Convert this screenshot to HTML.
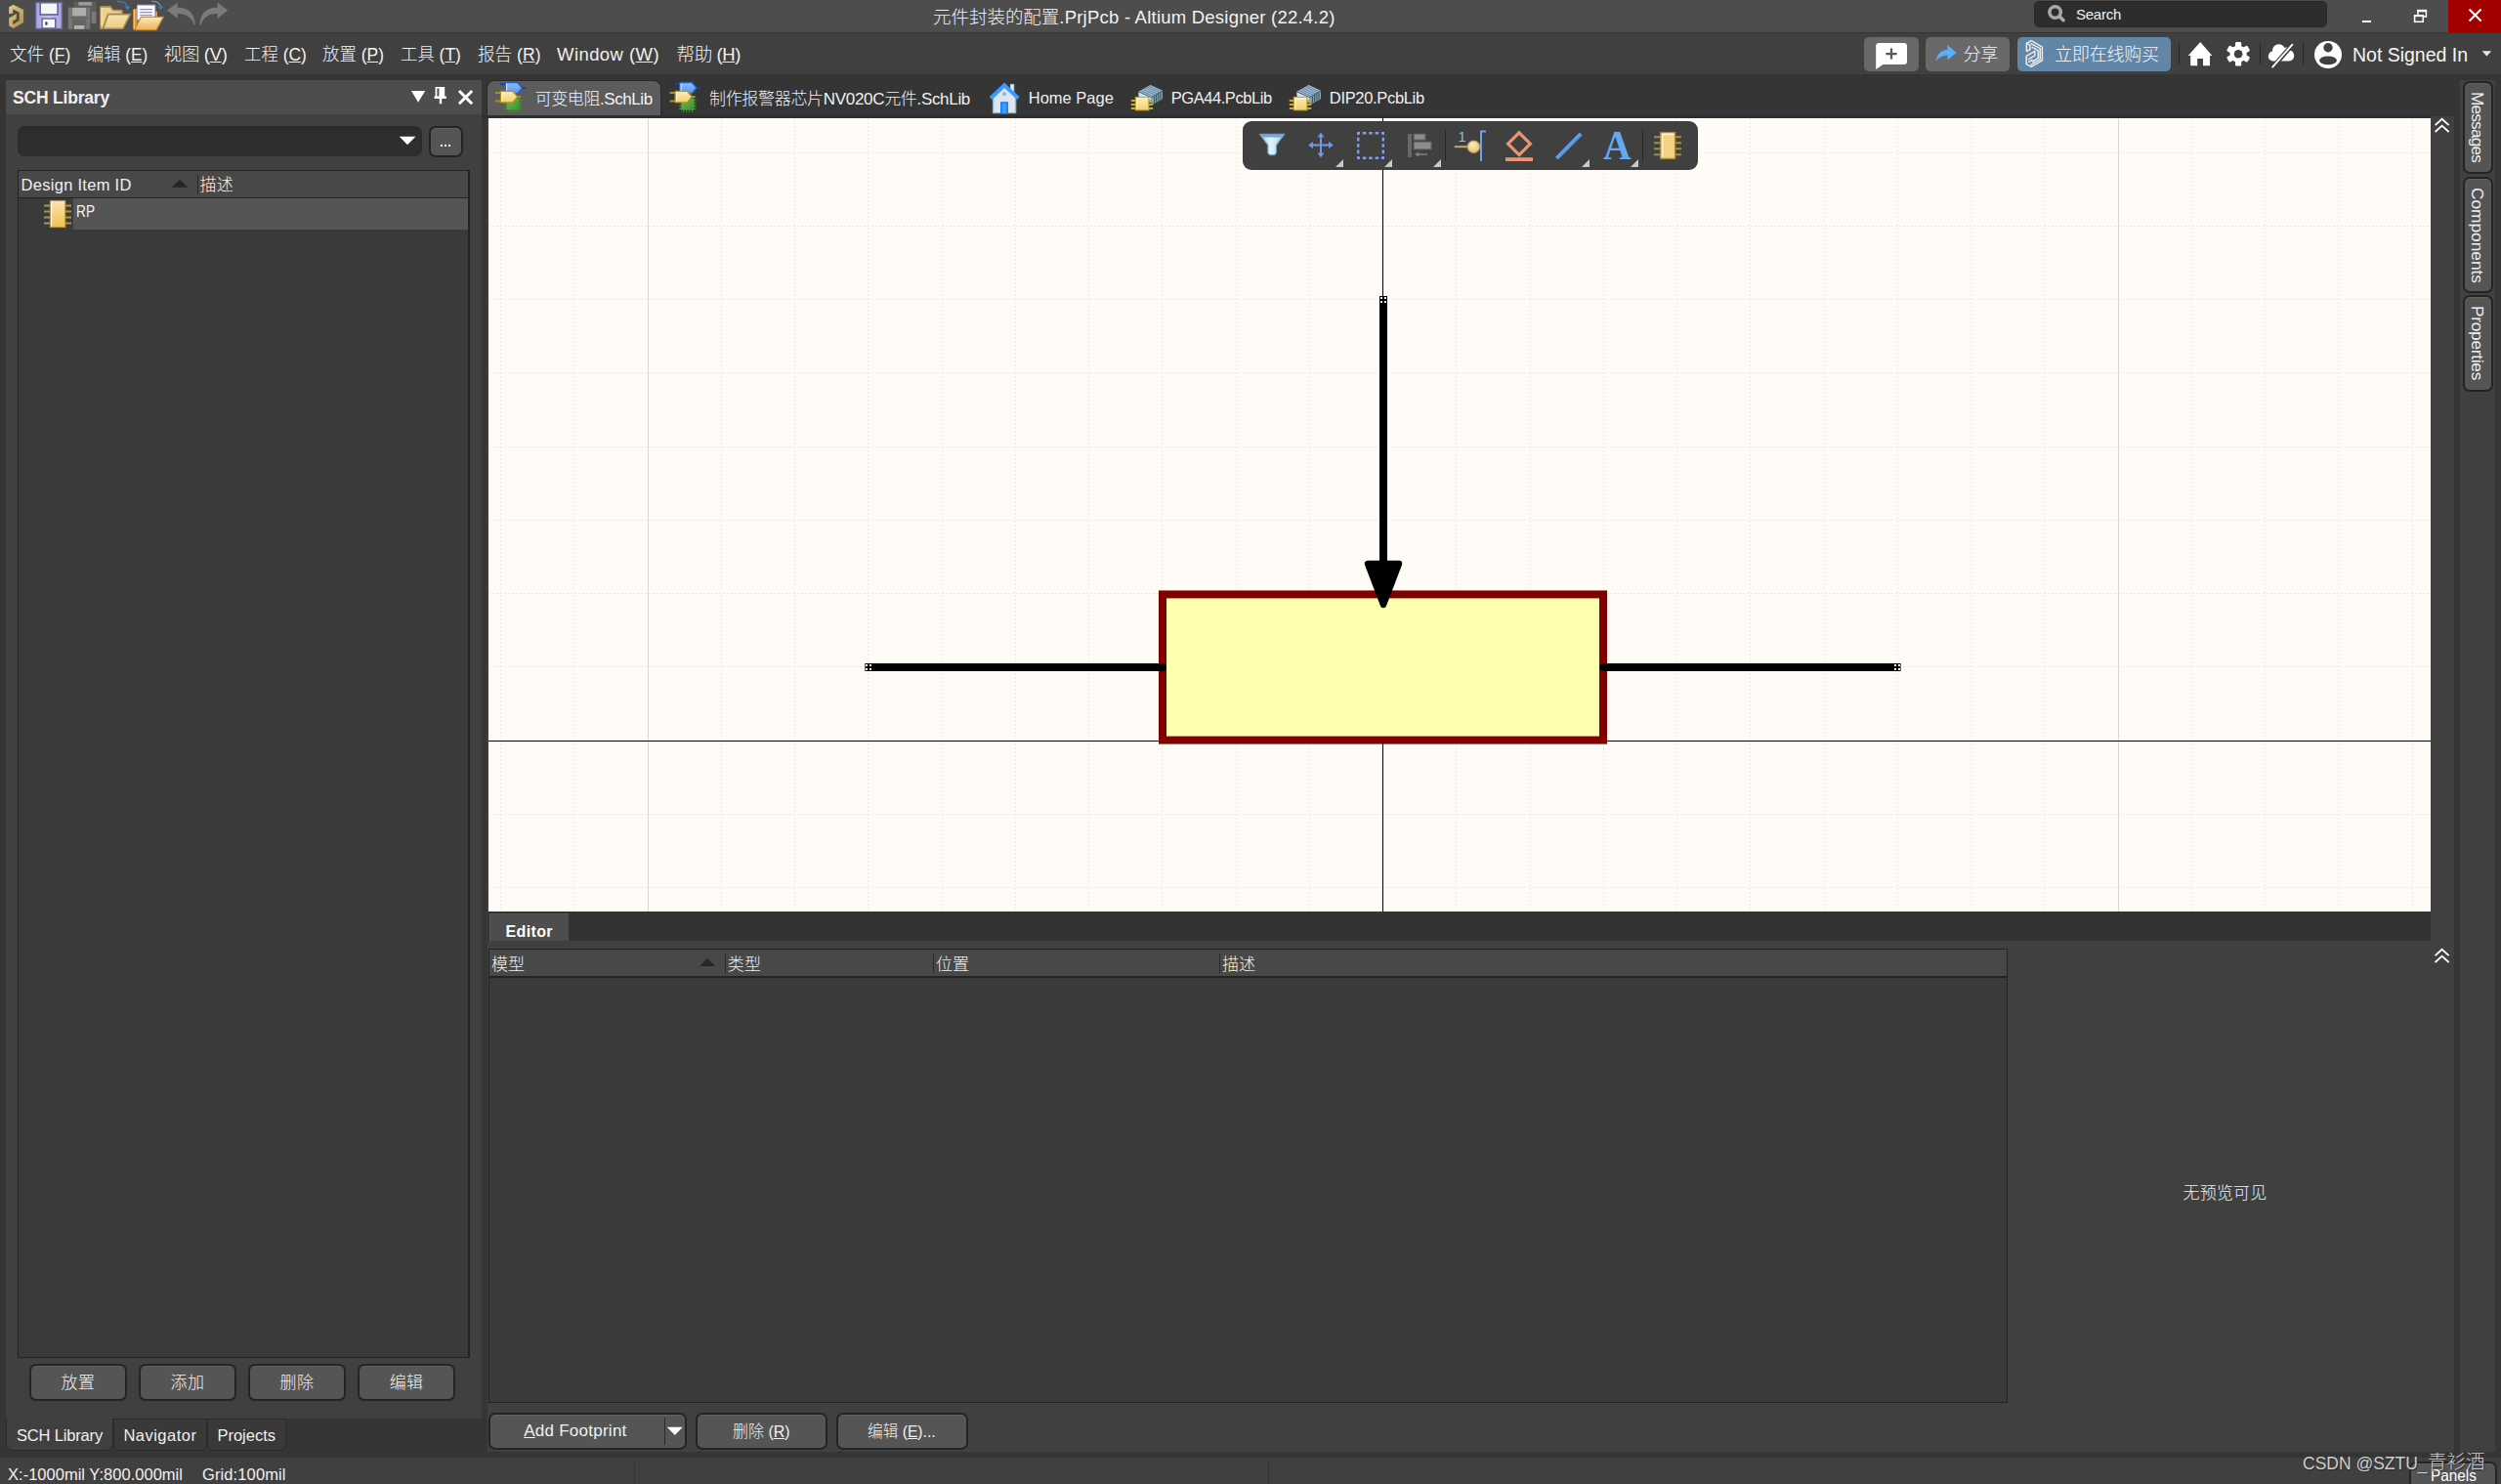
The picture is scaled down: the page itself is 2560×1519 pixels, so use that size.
<!DOCTYPE html>
<html lang="zh-CN">
<head>
<meta charset="utf-8">
<title>元件封装的配置.PrjPcb - Altium Designer (22.4.2)</title>
<style>
*{box-sizing:border-box;margin:0;padding:0}
html,body{width:2560px;height:1519px;overflow:hidden;background:#353535}
body{position:relative;font-family:"Liberation Sans","Noto Sans CJK SC",sans-serif;color:#f0f0f0;font-size:17px;font-weight:300}
.a{position:absolute}
.t{position:absolute;white-space:nowrap;line-height:1;transform-origin:0 0}
u{text-decoration:underline;text-underline-offset:1px;text-decoration-thickness:1px}
.btn{position:absolute;background:#555;border:2px solid #242424;border-radius:7px;box-shadow:inset 0 1px 0 #626262}
svg{position:absolute;overflow:visible}
</style>
</head>
<body>
<!-- ===== title bar ===== -->
<div class="a" id="titlebar" style="left:0;top:0;width:2560px;height:33px;background:#4d4d4d"></div>
<div class="a" style="left:0;top:33px;width:2560px;height:1px;background:#333"></div>

<!-- title bar icons -->
<svg id="tb-icons" style="left:0;top:0" width="260" height="33" viewBox="0 0 260 33">
<defs>
<linearGradient id="gGold" x1="0" y1="0" x2="1" y2="1"><stop offset="0" stop-color="#e6cf8e"/><stop offset="1" stop-color="#a98a42"/></linearGradient>
<linearGradient id="gSave" x1="0" y1="0" x2="1" y2="0"><stop offset="0" stop-color="#a9a3dc"/><stop offset=".5" stop-color="#c9c4ee"/><stop offset="1" stop-color="#a9a3dc"/></linearGradient>
<linearGradient id="gFold" x1="0" y1="0" x2="0" y2="1"><stop offset="0" stop-color="#f7e3ad"/><stop offset="1" stop-color="#eccb84"/></linearGradient>
<linearGradient id="gFold2" x1="0" y1="0" x2="0" y2="1"><stop offset="0" stop-color="#fce9c0"/><stop offset="1" stop-color="#efb254"/></linearGradient>
</defs>
<!-- altium logo -->
<path d="M9.2 7.3 L13.7 4.8 L24.1 10.1 V23 L13.7 29.1 L9.2 26.6 V18.5 L13.2 16.2 V24.6 L13.7 24.9 L19.8 21 V12.7 L13.2 9.3 V13.4 L9.2 14.2 Z M13.2 16.2 L16.8 14 V19.6 L13.2 21.6 Z" fill="url(#gGold)"/>
<!-- save -->
<rect x="36.6" y="2.6" width="26.8" height="26.8" fill="url(#gSave)" stroke="#646a9c" stroke-width="1.4"/>
<rect x="42" y="4" width="16.4" height="10" fill="#f6f6f6"/>
<rect x="40.4" y="14.2" width="19.4" height="1.6" fill="#646a9c"/>
<rect x="40.4" y="3" width="1.6" height="12" fill="#646a9c"/><rect x="58.4" y="3" width="1.6" height="12" fill="#646a9c"/>
<rect x="42.2" y="18.4" width="15.4" height="11" fill="#646a9c"/>
<rect x="43.8" y="19.8" width="12.2" height="8.4" fill="#fafafa"/>
<ellipse cx="47.4" cy="24" rx="1.3" ry="2.1" fill="#3f4685"/>
<!-- save all (disabled) -->
<g>
<rect x="75.4" y="1.8" width="23" height="22.4" fill="#5d5d5d"/>
<rect x="80.4" y="2" width="13.6" height="3.6" fill="#9a9a9a"/>
<rect x="94" y="12" width="4.4" height="12" fill="#7a7a7a"/>
<rect x="69.8" y="7.6" width="22.4" height="22.2" fill="#777"/>
<rect x="74.2" y="8" width="13.8" height="8.2" fill="#adadad"/>
<rect x="72.6" y="17.6" width="17" height="1.6" fill="#5c5c5c"/>
<rect x="73.8" y="20" width="14.4" height="9.8" fill="#646464"/>
<rect x="76" y="26" width="10.4" height="3.8" fill="#b0b0b0"/>
</g>
<!-- open folder -->
<path d="M102.8 29.2 V7 L112.8 6.6 L115.8 10.4 L125 10.6 V14.6 H110.6 L105.4 29.2 Z" fill="#efd08a" stroke="#a58b57" stroke-width="1.6" stroke-linejoin="round"/>
<path d="M104 7.8 V26" stroke="#f9e6b8" stroke-width="1.2"/>
<path d="M105.6 29.2 L110.9 14.6 H133.4 L126 29.2 Z" fill="url(#gFold)" stroke="#a58b57" stroke-width="1.6" stroke-linejoin="round"/>
<path d="M120 1.5 C125.6 1 129.8 3.2 130.6 7.4" fill="none" stroke="#3f7aae" stroke-width="1.5"/>
<path d="M127.2 6.2 L133.8 6.6 L130.4 10.4 Z" fill="#3f7aae"/>
<!-- open project -->
<path d="M136.2 30.6 V9.4 L140.6 8.6 V30.6 Z" fill="#d8922e"/>
<path d="M137.4 10 V29" stroke="#f6d9a0" stroke-width="1"/>
<rect x="140.6" y="5.2" width="18.2" height="15" fill="#fbfbff" stroke="#b3ace0" stroke-width="1"/>
<path d="M143.2 9.6 H155.8 M143.2 12.6 H155.8 M143.2 15.5 H155.8" stroke="#8c90c2" stroke-width="1.1"/>
<path d="M159.4 11.4 L161 11.8 V17.4 H159.4 Z" fill="#e0aa50"/>
<path d="M137.8 30.6 L144.3 17.4 H167.2 L160 30.6 Z" fill="url(#gFold2)" stroke="#c48f2e" stroke-width="1.2" stroke-linejoin="round"/>
<path d="M155.2 1.4 C159.8 1 163.6 3.2 164.4 7" fill="none" stroke="#6a9cc0" stroke-width="1.4"/>
<path d="M161.4 6.2 L167.4 6.4 L164.4 10.2 Z" fill="#3d74aa"/>
<!-- undo -->
<path d="M171 10.6 L181.6 2.8 L181.6 7.8 C192 7.2 199.4 13.4 199.8 25.6 L198.6 25.6 C196.6 18.2 190.4 13.6 181.6 14 L181.6 19 Z" fill="#7a7a7a"/>
<!-- redo -->
<path d="M233.2 10.6 L222.6 2.8 L222.6 7.8 C212.2 7.2 204.8 13.4 204.4 25.6 L205.6 25.6 C207.6 18.2 213.8 13.6 222.6 14 L222.6 19 Z" fill="#7a7a7a"/>
</svg>
<span class="t" style="letter-spacing:-0.031px;left:955px;top:9px;font-size:18.5px;color:#f2f2f2">元件封装的配置</span><span class="t" style="letter-spacing:0.228px;left:1084.3px;top:9px;font-size:18.5px;color:#f2f2f2">.PrjPcb - Altium Designer (22.4.2)</span>
<!-- search -->
<div class="a" style="left:2082px;top:1px;width:300px;height:27px;background:#2d2d2d;border-radius:5px;border:1px solid #272727"></div>
<svg style="left:2094px;top:2px" width="22" height="22" viewBox="2094 2 22 22"><circle cx="2103.6" cy="12.5" r="5.7" fill="none" stroke="#a8a8a8" stroke-width="3.6"/><path d="M2108 16.8 L2112 20.8" stroke="#a8a8a8" stroke-width="3.6" stroke-linecap="round"/></svg>
<span class="t" id="search" style="letter-spacing:-0.255px;left:2125px;top:7px;font-size:15px;color:#f0f0f0">Search</span>
<!-- window controls -->
<div class="a" style="left:2418px;top:20.6px;width:9.2px;height:2.6px;background:#fff"></div>
<svg style="left:2469px;top:8px" width="18" height="17" viewBox="2469 8 18 17"><path d="M2474.9 15 V11.6 H2483.4 V17.1 H2481" fill="none" stroke="#fff" stroke-width="1.5"/><path d="M2474.1 10.8 H2484.1" stroke="#fff" stroke-width="2"/><rect x="2471.6" y="16.4" width="8.6" height="5.9" fill="none" stroke="#fff" stroke-width="1.5"/><path d="M2470.9 16 H2480.9" stroke="#fff" stroke-width="2"/></svg>
<div class="a" style="left:2506px;top:0;width:54px;height:33px;background:#a00000"></div>
<svg style="left:2526px;top:8px" width="16" height="16" viewBox="2526 8 16 16"><path d="M2527.6 9.6 L2539.6 21.6 M2539.6 9.6 L2527.6 21.6" stroke="#fff" stroke-width="2.1"/></svg>

<!-- ===== menu bar ===== -->
<div class="a" id="menubar" style="left:0;top:34px;width:2560px;height:42px;background:#404040"></div>

<!-- menu items -->
<span class="t" style="transform:scaleX(0.9469);left:10px;top:46.6px;font-size:18.5px">文件 (<u>F</u>)</span>
<span class="t" style="transform:scaleX(0.9307);left:89px;top:46.6px;font-size:18.5px">编辑 (<u>E</u>)</span>
<span class="t" style="letter-spacing:-0.355px;left:167.8px;top:46.6px;font-size:18.5px">视图 (<u>V</u>)</span>
<span class="t" style="transform:scaleX(0.9417);left:249.5px;top:46.6px;font-size:18.5px">工程 (<u>C</u>)</span>
<span class="t" style="transform:scaleX(0.9427);left:330px;top:46.6px;font-size:18.5px">放置 (<u>P</u>)</span>
<span class="t" style="transform:scaleX(0.9393);left:410.2px;top:46.6px;font-size:18.5px">工具 (<u>T</u>)</span>
<span class="t" style="transform:scaleX(0.9505);left:488.9px;top:46.6px;font-size:18.5px">报告 (<u>R</u>)</span>
<span class="t" style="letter-spacing:0.425px;left:570px;top:46.6px;font-size:18.5px">Window (<u>W</u>)</span>
<span class="t" style="letter-spacing:-0.410px;left:692.6px;top:46.6px;font-size:18.5px">帮助 (<u>H</u>)</span>

<!-- ===== left panel ===== -->
<div class="a" id="lp-head" style="left:6px;top:82px;width:487px;height:35px;background:#4d4d4d"></div>
<div class="a" id="lp-body" style="left:6px;top:117px;width:487px;height:1335px;background:#404040"></div>

<!-- ===== canvas ===== -->
<div class="a" id="canvas" style="left:500px;top:121px;width:1988px;height:812px;background:#fffcf8;overflow:hidden"></div>

<div class="a" style="left:498px;top:118px;width:2px;height:845px;background:#3e3e3e"></div>
<!-- ===== bottom editor panel ===== -->
<div class="a" id="ed-body" style="left:499px;top:963px;width:2013px;height:523px;background:#404040"></div>

<!-- ===== right strip ===== -->
<div class="a" id="rstrip" style="left:2488px;top:119px;width:24px;height:1367px;background:#404040"></div>
<div class="a" id="rbar" style="left:2518px;top:76px;width:42px;height:1410px;background:#404040"></div>

<!-- ===== status bar ===== -->
<div class="a" id="status" style="left:0;top:1492px;width:2560px;height:27px;background:#404040"></div>
<!-- ===== menu bar right side ===== -->
<div class="a" style="left:1908px;top:38px;width:56px;height:35px;background:#696969;border-radius:5px"></div>
<svg style="left:1918px;top:42px" width="38" height="32" viewBox="1918 42 38 32">
<path d="M1923.4 44 H1948.8 Q1952 44 1952 47.2 V62.8 Q1952 66 1948.8 66 H1927.4 L1920.2 71 V47.2 Q1920.2 44 1923.4 44 Z" fill="#fff"/>
<path d="M1936 49.6 V60.6 M1930.4 55.1 H1941.6" stroke="#555" stroke-width="2.2"/>
</svg>
<div class="a" style="left:1971px;top:38px;width:86px;height:35px;background:#696969;border-radius:5px"></div>
<svg style="left:1980px;top:44px" width="24" height="20" viewBox="1980 44 24 20">
<path d="M1981.6 62.8 C1982.6 55.4 1987 51.2 1993.4 51 L1993.4 46 L2002.6 54 L1993.4 61.6 L1993.4 56.6 C1988.4 56.6 1984.6 58.6 1981.6 62.8 Z" fill="#5baefc"/>
</svg>
<span class="t" style="letter-spacing:-0.300px;left:2009.6px;top:47.4px;font-size:18px;color:#f4f4f4">分享</span>
<div class="a" style="left:2065px;top:38px;width:157px;height:35px;background:#6286a8;border-radius:5px"></div>
<svg style="left:2072px;top:40px" width="22" height="31" viewBox="2072 40 22 31">
<g fill="none" stroke="#ececec" stroke-width="1.5" stroke-linejoin="round" stroke-linecap="round">
<path d="M2074.4 44.4 L2079.2 41.6 L2090.4 48.1 V61.9 L2079.2 68.4 L2074.2 65.6 V57.4 L2082.8 52.4 V56.8 L2076.6 60.4"/>
<path d="M2074.4 44.4 V52.6 L2078 50.6 V46.4 Z"/>
<path d="M2078.8 44.6 L2088.2 49.6 V60.8 L2079 66.2"/>
<path d="M2080.2 48.4 L2086.2 51.8 V59.4 L2080.4 63"/>
<path d="M2076.6 63.4 L2080 61.4"/>
</g>
</svg>
<span class="t" style="letter-spacing:-0.233px;left:2103.2px;top:47.2px;font-size:18px;color:#f4f4f4">立即在线购买</span>
<div class="a" style="left:2230px;top:44px;width:1px;height:22px;background:#262626"></div>
<div class="a" style="left:2313px;top:44px;width:1px;height:22px;background:#262626"></div>
<div class="a" style="left:2357px;top:44px;width:1px;height:22px;background:#262626"></div>
<svg style="left:2238px;top:40px" width="170" height="32" viewBox="2238 40 170 32">
<!-- home -->
<path d="M2252.2 43 L2264.4 57 L2262 57 L2262 67.2 L2255 67.2 L2255 60 L2249.2 60 L2249.2 67.2 L2242.2 67.2 L2242.2 57 L2239.8 57 Z" fill="#fff"/>
<!-- gear -->
<g transform="translate(2291.1 55.2)" fill="#fff">
<circle r="8.6"/>
<g id="tooth"><rect x="-3.1" y="-12.2" width="6.2" height="6" rx="1.2"/></g>
<rect x="-3.1" y="-12.2" width="6.2" height="6" rx="1.2" transform="rotate(60)"/>
<rect x="-3.1" y="-12.2" width="6.2" height="6" rx="1.2" transform="rotate(120)"/>
<rect x="-3.1" y="-12.2" width="6.2" height="6" rx="1.2" transform="rotate(180)"/>
<rect x="-3.1" y="-12.2" width="6.2" height="6" rx="1.2" transform="rotate(240)"/>
<rect x="-3.1" y="-12.2" width="6.2" height="6" rx="1.2" transform="rotate(300)"/>
<circle r="4.3" fill="#404040"/>
</g>
<!-- cloud off -->
<path d="M2327.6 62.4 C2323.6 62.4 2321.8 59.8 2321.8 57.4 C2321.8 54.8 2323.6 52.8 2326 52.4 C2326 48.2 2328.8 45.2 2332.4 45.2 C2335.2 45.2 2337.4 46.6 2338.6 49 C2339.6 48.4 2340.6 48.2 2341.6 48.6 C2342.6 49 2343.4 50 2343.6 51.4 C2346.4 51.8 2348.2 54 2348.2 56.8 C2348.2 60 2346 62.4 2343 62.4 Z" fill="#fff"/>
<path d="M2348.4 43.6 L2327.2 68" stroke="#404040" stroke-width="4.6"/>
<path d="M2346.4 45.6 L2326.2 68.6" stroke="#fff" stroke-width="1.8" stroke-linecap="round"/>
<!-- user -->
<circle cx="2383" cy="56" r="14" fill="#fff"/>
<circle cx="2383" cy="48.8" r="4.7" fill="#404040"/>
<ellipse cx="2383" cy="61.8" rx="9" ry="4.4" fill="#404040"/>
</svg>
<span class="t" style="letter-spacing:-0.013px;left:2408px;top:46.6px;font-size:19.5px;color:#f4f4f4">Not Signed In</span>
<svg style="left:2540px;top:52px" width="11" height="6" viewBox="0 0 11 6"><path d="M.6 .2 H10.2 L5.4 5.4 Z" fill="#e8e8e8"/></svg>
<!-- ===== left panel content ===== -->
<span class="t" style="letter-spacing:-0.195px;left:13px;top:92.2px;font-size:17.5px;font-weight:bold;color:#f0f0f0">SCH Library</span>
<svg style="left:420px;top:88px" width="66" height="20" viewBox="420 88 66 20">
<path d="M421 93 H435.2 L428.1 104.8 Z" fill="#fff"/>
<path d="M445.6 89 H455.2 V98.6 H456.8 V101 H452.2 V106.2 H449.8 V101 H444.6 V98.6 H445.6 Z M447.4 90.6 V98.6 H449.4 V90.6 Z" fill="#fff" fill-rule="evenodd"/>
<path d="M470 93 L483.2 106.2 M483.2 93 L470 106.2" stroke="#fff" stroke-width="3"/>
</svg>
<div class="a" style="left:18px;top:129px;width:414px;height:31px;background:linear-gradient(#2a2a2a,#2e2e2e 30%);border:1px solid #2a2a2a;border-radius:7px"></div>
<svg style="left:408px;top:139px" width="18" height="10" viewBox="0 0 18 10"><path d="M.8 .8 H17.4 L9.1 9.2 Z" fill="#fff"/></svg>
<div class="btn" style="left:439px;top:129px;width:35px;height:32px"></div>
<div class="a" style="left:451px;top:148px;width:2px;height:2px;background:#eee;box-shadow:4px 0 #eee,8px 0 #eee"></div>
<!-- list -->
<div class="a" style="left:18px;top:174px;width:463px;height:1216px;background:#3a3a3a;border:1px solid #232323;border-right-width:2px"></div>
<div class="a" style="left:19px;top:175px;width:460px;height:27px;background:#484848"></div>
<div class="a" style="left:19px;top:201.6px;width:460px;height:1.6px;background:#232323"></div>
<span class="t" style="letter-spacing:0.277px;left:21.6px;top:181px;font-size:16.5px;color:#f0f0f0">Design Item ID</span>
<svg style="left:175px;top:183px" width="18" height="10" viewBox="0 0 18 10"><path d="M1 8.8 L9 .8 L17 8.8 Z" fill="#262626"/></svg>
<div class="a" style="left:202px;top:179px;width:1px;height:20px;background:#2a2a2a"></div>
<span class="t" style="letter-spacing:0.200px;left:204.6px;top:181px;font-size:17px;color:#f0f0f0">描述</span>
<div class="a" style="left:75px;top:203px;width:404px;height:32px;background:#555"></div>
<svg style="left:44px;top:204px" width="30" height="30" viewBox="44 204 30 30">
<defs><linearGradient id="gChip" x1="0" y1="0" x2="0" y2="1"><stop offset="0" stop-color="#fbe3ac"/><stop offset="1" stop-color="#f0c152"/></linearGradient></defs>
<path d="M45 210.6 H73 M45 216.6 H73 M45 222.6 H73 M45 228.6 H73" stroke="#b3933a" stroke-width="2"/>
<rect x="51.4" y="205.4" width="15.4" height="27.2" fill="url(#gChip)" stroke="#b8962f" stroke-width="1"/>
<path d="M52.6 206.4 V231.6" stroke="#fff6dc" stroke-width="1.2"/>
</svg>
<span class="t" style="transform:scaleX(0.8289);left:77.6px;top:208px;font-size:16.5px;color:#f4f4f4">RP</span>
<!-- buttons -->
<div class="btn" style="left:30px;top:1396px;width:100px;height:38px"></div>
<div class="btn" style="left:142px;top:1396px;width:100px;height:38px"></div>
<div class="btn" style="left:254px;top:1396px;width:100px;height:38px"></div>
<div class="btn" style="left:366px;top:1396px;width:100px;height:38px"></div>
<span class="t" style="letter-spacing:0.300px;left:62.6px;top:1407.2px;font-size:17px">放置</span>
<span class="t" style="letter-spacing:0.300px;left:174.6px;top:1407.2px;font-size:17px">添加</span>
<span class="t" style="letter-spacing:0.300px;left:286.6px;top:1407.2px;font-size:17px">删除</span>
<span class="t" style="letter-spacing:0.300px;left:398.8px;top:1407.2px;font-size:17px">编辑</span>
<!-- bottom tabs -->
<div class="a" style="left:6px;top:1452px;width:110px;height:33px;background:#404040;border:1px solid #2b2b2b;border-top:none;border-radius:0 0 7px 7px"></div>
<div class="a" style="left:116px;top:1452px;width:96px;height:33px;background:#393939;border:1px solid #2b2b2b;border-radius:0 0 7px 7px"></div>
<div class="a" style="left:212px;top:1452px;width:81px;height:33px;background:#393939;border:1px solid #2b2b2b;border-radius:0 0 7px 7px"></div>
<span class="t" style="letter-spacing:-0.169px;left:17px;top:1461px;font-size:16.5px">SCH Library</span>
<span class="t" style="letter-spacing:0.486px;left:126.4px;top:1461px;font-size:16.5px">Navigator</span>
<span class="t" style="letter-spacing:-0.001px;left:222.4px;top:1461px;font-size:16.5px">Projects</span>
<!-- status -->
<span class="t" style="letter-spacing:0.019px;left:8px;top:1501.2px;font-size:16.5px">X:-1000mil Y:800.000mil</span>
<span class="t" style="letter-spacing:0.111px;left:207px;top:1501.2px;font-size:16.5px">Grid:100mil</span>
<div class="a" style="left:649px;top:1496px;width:1px;height:23px;background:#333"></div>
<div class="a" style="left:1298px;top:1496px;width:1px;height:23px;background:#333"></div>
<!-- ===== document tabs ===== -->
<div class="a" style="left:498px;top:82px;width:179px;height:37px;background:#5c5c5c;border:1px solid #2a2a2a;border-bottom:none;border-radius:8px 8px 0 0"></div>
<div class="a" style="left:493px;top:118px;width:1995px;height:3px;background:#2e2e2e"></div>
<svg style="left:0;top:0" width="1500" height="120" viewBox="0 0 1500 120">
<defs>
<linearGradient id="gBlue" x1="0" y1="0" x2="0" y2="1"><stop offset="0" stop-color="#8fc0ff"/><stop offset="1" stop-color="#5a92ec"/></linearGradient>
<linearGradient id="gYel" x1="0" y1="0" x2="0" y2="1"><stop offset="0" stop-color="#fbeeb4"/><stop offset="1" stop-color="#efd070"/></linearGradient>
<linearGradient id="gGrn" x1="0" y1="0" x2="1" y2="1"><stop offset="0" stop-color="#6cbb55"/><stop offset="1" stop-color="#3f8f30"/></linearGradient>
</defs>
<g transform="translate(507 84)">
<path d="M5 2.3 H10.6 M27 6 H31.2" stroke="#1446a8" stroke-width="2"/>
<path d="M10.2 .5 H22.6 L27.4 6 L22.6 11.8 H10.2 Z" fill="url(#gBlue)" stroke="#2560c8" stroke-width="1.3" stroke-linejoin="round"/>
<path d="M11.6 1.8 V10.4" stroke="#cfe4ff" stroke-width="1.1"/>
<path d="M9.4 24.4 H27 M9.4 27.4 H27 M25 18.4 H27 M25 21.4 H27 M14 28 V31 M17 28 V31 M20 28 V31 M23 28 V31" stroke="#3f9230" stroke-width="1.1"/>
<rect x="11.6" y="16.8" width="13.2" height="11.6" fill="url(#gGrn)" stroke="#3e8e30" stroke-width=".8"/>
<path d="M0 11 H6 M0 19.5 H6 M22.4 15 H26" stroke="#b58d1c" stroke-width="2"/>
<path d="M5.5 9.3 H17.8 L22.6 15 L17.8 20.8 H5.5 Z" fill="url(#gYel)" stroke="#b8921f" stroke-width="1.2" stroke-linejoin="round"/>
<path d="M6.9 10.6 V19.6" stroke="#fff6d4" stroke-width="1"/>
</g>
<g transform="translate(685.6 84)">
<path d="M5 2.3 H10.6 M27 6 H31.2" stroke="#1446a8" stroke-width="2"/>
<path d="M10.2 .5 H22.6 L27.4 6 L22.6 11.8 H10.2 Z" fill="url(#gBlue)" stroke="#2560c8" stroke-width="1.3" stroke-linejoin="round"/>
<path d="M11.6 1.8 V10.4" stroke="#cfe4ff" stroke-width="1.1"/>
<path d="M9.4 24.4 H27 M9.4 27.4 H27 M25 18.4 H27 M25 21.4 H27 M14 28 V31 M17 28 V31 M20 28 V31 M23 28 V31" stroke="#3f9230" stroke-width="1.1"/>
<rect x="11.6" y="16.8" width="13.2" height="11.6" fill="url(#gGrn)" stroke="#3e8e30" stroke-width=".8"/>
<path d="M0 11 H6 M0 19.5 H6 M22.4 15 H26" stroke="#b58d1c" stroke-width="2"/>
<path d="M5.5 9.3 H17.8 L22.6 15 L17.8 20.8 H5.5 Z" fill="url(#gYel)" stroke="#b8921f" stroke-width="1.2" stroke-linejoin="round"/>
<path d="M6.9 10.6 V19.6" stroke="#fff6d4" stroke-width="1"/>
</g>
<g transform="translate(1157 86)">
<path d="M8.4 7.8 L8.4 12.5 L21.7 19.6 L21.7 13.7 Z" fill="#c4e2ea"/>
<path d="M21.7 13.7 L33 6.8 L33 15.2 L23.7 20.6 L21.7 19.6 Z" fill="#7fa4ae"/>
<path d="M24.4 12.4 V19.8 M26.6 11 V18.6 M28.8 9.6 V17.4 M31 8.4 V16" stroke="#2f4a58" stroke-width=".9"/>
<path d="M8.4 7.8 L20.6 .9 L33 6.8 L21.7 13.7 Z" fill="#a6bfd8"/>
<path d="M10.6 6.6 L23.6 12.6 M12.8 5.4 L25.6 11.4 M15 4.2 L27.6 10.2 M17.2 3 L29.6 9 M19 1.9 L31.4 7.8" stroke="#5f7f9c" stroke-width=".9"/>
<path d="M8.4 7.8 L21.7 13.7 L33 6.8" fill="none" stroke="#35506a" stroke-width=".8"/>
<path d="M.8 16.9 H23.2 M.8 20.9 H23.2 M.8 25 H23.2" stroke="#c6a53a" stroke-width="2"/>
<rect x="5.4" y="13.5" width="13.4" height="13.2" fill="url(#gYel)" stroke="#c9a93e" stroke-width="1.2"/>
<path d="M6.8 25.6 V14.8 H17.6" fill="none" stroke="#fff4cc" stroke-width="1"/>
</g>
<g transform="translate(1319 86)">
<path d="M8.4 7.8 L8.4 12.5 L21.7 19.6 L21.7 13.7 Z" fill="#c4e2ea"/>
<path d="M21.7 13.7 L33 6.8 L33 15.2 L23.7 20.6 L21.7 19.6 Z" fill="#7fa4ae"/>
<path d="M24.4 12.4 V19.8 M26.6 11 V18.6 M28.8 9.6 V17.4 M31 8.4 V16" stroke="#2f4a58" stroke-width=".9"/>
<path d="M8.4 7.8 L20.6 .9 L33 6.8 L21.7 13.7 Z" fill="#a6bfd8"/>
<path d="M10.6 6.6 L23.6 12.6 M12.8 5.4 L25.6 11.4 M15 4.2 L27.6 10.2 M17.2 3 L29.6 9 M19 1.9 L31.4 7.8" stroke="#5f7f9c" stroke-width=".9"/>
<path d="M8.4 7.8 L21.7 13.7 L33 6.8" fill="none" stroke="#35506a" stroke-width=".8"/>
<path d="M.8 16.9 H23.2 M.8 20.9 H23.2 M.8 25 H23.2" stroke="#c6a53a" stroke-width="2"/>
<rect x="5.4" y="13.5" width="13.4" height="13.2" fill="url(#gYel)" stroke="#c9a93e" stroke-width="1.2"/>
<path d="M6.8 25.6 V14.8 H17.6" fill="none" stroke="#fff4cc" stroke-width="1"/>
</g>
<!-- home page icon -->
<g transform="translate(1012 84)">
<rect x="22.4" y="2.4" width="3.4" height="9" fill="#e8eef8" stroke="#9cc4d6" stroke-width="1"/>
<path d="M4.6 14 L16.1 4 L27.6 14 V31.6 H4.6 Z" fill="#dde5f1" stroke="#8db7ca" stroke-width="1.4"/>
<rect x="12" y="20.2" width="8" height="12" fill="#1f7df6"/>
<rect x="13.8" y="22" width="4.4" height="10.2" fill="#3a9eff"/>
<circle cx="16" cy="12.2" r="1.9" fill="#8fb6c6"/>
<path d="M2 16.6 L16.1 3.2 L30.4 16.6" fill="none" stroke="#399bff" stroke-width="4" stroke-linejoin="miter"/>
</g>
</svg>
<span class="t" style="letter-spacing:-0.428px;left:547.7px;top:92.5px;font-size:17px;color:#f4f4f4">可变电阻.SchLib</span>
<span class="t" style="letter-spacing:-0.317px;left:726px;top:92.5px;font-size:17px;color:#f0f0f0">制作报警器芯片NV020C元件.SchLib</span>
<span class="t" style="letter-spacing:-0.016px;left:1052.8px;top:92px;font-size:16.5px;color:#f0f0f0">Home Page</span>
<span class="t" style="letter-spacing:-0.436px;left:1198.7px;top:92px;font-size:16.5px;color:#f0f0f0">PGA44.PcbLib</span>
<span class="t" style="letter-spacing:-0.326px;left:1360.8px;top:92px;font-size:16.5px;color:#f0f0f0">DIP20.PcbLib</span>
<!-- ===== schematic canvas content ===== -->
<svg style="left:500px;top:121px" width="1988" height="812" viewBox="500 121 1988 812">
<g shape-rendering="crispEdges" stroke-width="1">
<path d="M512.5 121 V933 M587.5 121 V933 M738.5 121 V933 M813.5 121 V933 M888.5 121 V933 M964.5 121 V933 M1039.5 121 V933 M1114.5 121 V933 M1189.5 121 V933 M1265.5 121 V933 M1340.5 121 V933 M1490.5 121 V933 M1566.5 121 V933 M1641.5 121 V933 M1716.5 121 V933 M1791.5 121 V933 M1867.5 121 V933 M1942.5 121 V933 M2017.5 121 V933 M2092.5 121 V933 M2243.5 121 V933 M2318.5 121 V933 M2393.5 121 V933 M2469.5 121 V933 M500 156.5 H2488 M500 231.5 H2488 M500 306.5 H2488 M500 381.5 H2488 M500 457.5 H2488 M500 532.5 H2488 M500 607.5 H2488 M500 682.5 H2488 M500 833.5 H2488 M500 908.5 H2488" stroke="#eaeae6" stroke-dasharray="2 2" fill="none"/>
<path d="M663.5 121 V933 M2168.5 121 V933" stroke="#d8d8d4" fill="none"/>
<path d="M1415.5 121 V933 M500 758.5 H2488" stroke="#000" fill="none"/>
</g>
<g>
<path d="M885 683 H1192 M1639 683 H1946 M1416 303 V580" stroke="#fff" stroke-width="10" fill="none" stroke-linecap="butt"/>
<rect x="1190" y="608.4" width="451" height="149.2" fill="#ffffb0" stroke="#800000" stroke-width="8"/>
<path d="M885.4 683 H1190" stroke="#000" stroke-width="8" fill="none"/>
<path d="M1641 683 H1945.6" stroke="#000" stroke-width="8" fill="none"/>
<circle cx="1190" cy="683" r="4" fill="#000"/><circle cx="1641.4" cy="683" r="4" fill="#000"/>
<path d="M1416 303 V580" stroke="#000" stroke-width="8" fill="none"/>
<path d="M1400 577 H1432 L1416 619 Z" fill="#000" stroke="#000" stroke-width="6.4" stroke-linejoin="round"/>
<g fill="#fff" shape-rendering="crispEdges">
<rect x="1413" y="304" width="2" height="2"/><rect x="1417" y="304" width="2" height="2"/><rect x="1413" y="308" width="2" height="2"/><rect x="1417" y="308" width="2" height="2"/>
<rect x="886" y="680" width="2" height="2"/><rect x="890" y="680" width="2" height="2"/><rect x="886" y="684" width="2" height="2"/><rect x="890" y="684" width="2" height="2"/>
<rect x="1939" y="680" width="2" height="2"/><rect x="1943" y="680" width="2" height="2"/><rect x="1939" y="684" width="2" height="2"/><rect x="1943" y="684" width="2" height="2"/>
</g>
</g>
</svg>
<!-- ===== floating active bar ===== -->
<div class="a" style="left:1272px;top:124px;width:466px;height:50px;background:#404040;border-radius:9px"></div>
<svg style="left:1272px;top:124px" width="466" height="50" viewBox="1272 124 466 50">
<defs>
<linearGradient id="gFun" x1="0" y1="0" x2="1" y2="0"><stop offset="0" stop-color="#9fd0e4"/><stop offset=".45" stop-color="#e4f4f8"/><stop offset="1" stop-color="#9fcfe2"/></linearGradient>
<radialGradient id="gBall" cx=".4" cy=".35" r=".7"><stop offset="0" stop-color="#fbe9c0"/><stop offset="1" stop-color="#e8c070"/></radialGradient>
</defs>
<!-- filter -->
<path d="M1289.6 137.4 H1314.6 L1306.4 148.6 V156.6 L1304.4 158.6 H1299.8 L1297.8 156.6 V148.6 Z" fill="url(#gFun)" stroke="#6d9fca" stroke-width="1.2" stroke-linejoin="round"/>
<path d="M1290.4 137.8 H1313.8 L1311.8 140.6 H1292.4 Z" fill="#76a8d6"/>
<!-- move -->
<g stroke="#6f97ea" stroke-width="2" fill="#6f97ea">
<path d="M1352 138 V159 M1341.6 148.5 H1362.4" fill="none"/>
<path d="M1352 135.6 L1355.4 140.4 H1348.6 Z M1352 161.4 L1355.4 156.6 H1348.6 Z M1339.2 148.5 L1344 145.1 V151.9 Z M1364.8 148.5 L1360 145.1 V151.9 Z" stroke="none"/>
</g>
<!-- select rect -->
<rect x="1390.2" y="136.2" width="25.6" height="25.6" fill="none" stroke="#7b9df2" stroke-width="2.4" stroke-dasharray="3.6 2.8" stroke-dashoffset="1.8"/>
<!-- align -->
<rect x="1441" y="137" width="4" height="24" fill="#686868"/>
<rect x="1447.4" y="137.4" width="11.4" height="5.6" fill="#8c8c8c" stroke="#6e6e6e" stroke-width="1.2"/>
<rect x="1447.4" y="145.4" width="17.4" height="7.2" fill="#8c8c8c" stroke="#6e6e6e" stroke-width="1.2"/>
<path d="M1448 158 L1452.4 155.4 V157.2 H1461 V158.8 H1452.4 V160.6 Z" fill="#808080"/>
<!-- separators -->
<path d="M1479.5 133 V164.6 M1681.5 133 V164.6" stroke="#262626" stroke-width="1"/>
<!-- pin -->
<path d="M1488.8 150.2 H1503" stroke="#c9a95f" stroke-width="2"/>
<circle cx="1508.4" cy="150.2" r="6.2" fill="url(#gBall)" stroke="#b99b62" stroke-width="1.2"/>
<path d="M1521 134.4 H1516 V165" fill="none" stroke="#6aa2f2" stroke-width="2"/>
<!-- power port -->
<path d="M1555 135.8 L1566.4 147.2 L1555 158.6 L1543.6 147.2 Z" fill="none" stroke="#e99670" stroke-width="3.2"/>
<rect x="1541" y="161.2" width="28" height="3.8" fill="#e99670"/>
<!-- line -->
<path d="M1593.4 162.2 L1618.2 137" stroke="#5c9fe8" stroke-width="4"/>
<path d="M1594.6 163.2 L1619.2 138.2" stroke="#3f7fcf" stroke-width="1"/>
<!-- chip -->
<path d="M1693 140.2 H1721 M1693 146.2 H1721 M1693 152.2 H1721 M1693 158.2 H1721" stroke="#a88b3c" stroke-width="2"/>
<rect x="1699.8" y="135.6" width="14.8" height="26.8" fill="#f4d283" stroke="#a88b3c" stroke-width="1.4"/>
<path d="M1701.6 161 V137.4 H1713" fill="none" stroke="#fff4d4" stroke-width="1.6"/>
<!-- corner triangles -->
<path d="M1375 163 V171 H1367 Z M1425 163 V171 H1417 Z M1475 163 V171 H1467 Z M1627 163 V171 H1619 Z M1677 163 V171 H1669 Z" fill="#c8c8c8"/>
</svg>
<span class="t" style="left:1492.6px;top:132.6px;font-size:14.5px;color:#a9b6c4">1</span>
<span class="t" style="transform:scaleX(0.9538);left:1640.6px;top:129.4px;font-size:41.5px;font-weight:bold;font-family:'Liberation Serif',serif;color:#62a8f2">A</span>
<!-- ===== editor (model) panel ===== -->
<div class="a" style="left:499px;top:933px;width:1989px;height:30px;background:#333"></div>
<div class="a" style="left:501px;top:935px;width:81px;height:28px;background:#4d4d4d;border-left:1px solid #5a5a5a;border-top:1px solid #555"></div>
<span class="t" style="letter-spacing:0.364px;left:517.5px;top:946px;font-size:16px;font-weight:bold;color:#fff">Editor</span>
<div class="a" style="left:500px;top:971px;width:1555px;height:465px;background:#3a3a3a;border:1px solid #232323"></div>
<div class="a" style="left:501px;top:972px;width:1553px;height:27px;background:#484848"></div>
<div class="a" style="left:501px;top:999px;width:1553px;height:1.5px;background:#232323"></div>
<span class="t" style="letter-spacing:0.100px;left:503px;top:978.8px;font-size:17px">模型</span>
<svg style="left:715px;top:980px" width="18" height="10" viewBox="0 0 18 10"><path d="M1.2 9 L9.2 1 L17.2 9 Z" fill="#262626"/></svg>
<div class="a" style="left:742px;top:976px;width:1px;height:20px;background:#2a2a2a"></div>
<span class="t" style="letter-spacing:0.100px;left:744.8px;top:978.8px;font-size:17px">类型</span>
<div class="a" style="left:955px;top:976px;width:1px;height:20px;background:#2a2a2a"></div>
<span class="t" style="letter-spacing:0.100px;left:958px;top:978.8px;font-size:17px">位置</span>
<div class="a" style="left:1248px;top:976px;width:1px;height:20px;background:#2a2a2a"></div>
<span class="t" style="letter-spacing:0.100px;left:1251px;top:978.8px;font-size:17px">描述</span>
<span class="t" style="letter-spacing:0.200px;left:2234.5px;top:1212.5px;font-size:17px">无预览可见</span>
<!-- buttons -->
<div class="btn" style="left:500px;top:1446px;width:203px;height:38px"></div>
<div class="a" style="left:680px;top:1451px;width:1px;height:28px;background:#2b2b2b"></div>
<svg style="left:682px;top:1460px" width="18" height="10" viewBox="0 0 18 10"><path d="M.8 .8 H16.8 L8.8 9 Z" fill="#fff"/></svg>
<span class="t" style="letter-spacing:0.256px;left:536.2px;top:1455.5px;font-size:17px"><u>A</u>dd Footprint</span>
<div class="btn" style="left:712px;top:1446px;width:135px;height:38px"></div>
<span class="t" style="transform:scaleX(0.9399);left:749.7px;top:1457.4px;font-size:17px">删除 (<u>R</u>)</span>
<div class="btn" style="left:856px;top:1446px;width:135px;height:38px"></div>
<span class="t" style="transform:scaleX(0.9209);left:888px;top:1457.4px;font-size:17px">编辑 (<u>E</u>)...</span>
<!-- chevrons -->
<svg style="left:2491px;top:120px" width="18" height="18" viewBox="0 0 18 18"><path d="M1.6 8.2 L8.6 1.8 L15.6 8.2 M1.6 15 L8.6 8.6 L15.6 15" fill="none" stroke="#fff" stroke-width="1.8"/></svg>
<svg style="left:2491px;top:970px" width="18" height="18" viewBox="0 0 18 18"><path d="M1.6 8.2 L8.6 1.8 L15.6 8.2 M1.6 15 L8.6 8.6 L15.6 15" fill="none" stroke="#fff" stroke-width="1.8"/></svg>
<!-- ===== right side panel buttons ===== -->
<div class="a" style="left:2518px;top:76px;width:42px;height:6px;background:#353535"></div>
<div class="a" style="left:2554px;top:76px;width:6px;height:1416px;background:#363636"></div>
<div class="btn" style="left:2521px;top:83px;width:31px;height:95px;border-radius:7px"></div>
<div class="btn" style="left:2521px;top:181px;width:31px;height:119px;border-radius:7px"></div>
<div class="btn" style="left:2521px;top:302px;width:31px;height:99px;border-radius:7px"></div>
<div class="a" style="left:2543.6px;top:93.8px;width:0;height:0"><span class="t" style="letter-spacing:-0.846px;left:0;top:0;font-size:17.3px;transform:rotate(90deg)">Messages</span></div>
<div class="a" style="left:2543.6px;top:191.5px;width:0;height:0"><span class="t" style="letter-spacing:0.002px;left:0;top:0;font-size:17.3px;transform:rotate(90deg)">Components</span></div>
<div class="a" style="left:2543.6px;top:313px;width:0;height:0"><span class="t" style="letter-spacing:-0.277px;left:0;top:0;font-size:17.3px;transform:rotate(90deg)">Properties</span></div>
<!-- panels button / watermark -->
<div class="btn" style="left:2466px;top:1496px;width:90px;height:30px;border-radius:7px"></div>
<span class="t" style="transform:scaleX(0.9276);left:2488.2px;top:1502.4px;font-size:16.5px;color:#fff">Panels</span>
<span class="t" style="transform:scaleX(0.9408);left:2356.7px;top:1488.6px;font-size:18.6px;color:#cdcdcd;text-shadow:1px 1px 1px #2a2a2a">CSDN @SZTU_</span>
<span class="t" style="letter-spacing:-0.060px;left:2485px;top:1487.4px;font-size:19.6px;color:#cdcdcd;text-shadow:1px 1px 1px #2a2a2a">青衫酒</span>

</body>
</html>
